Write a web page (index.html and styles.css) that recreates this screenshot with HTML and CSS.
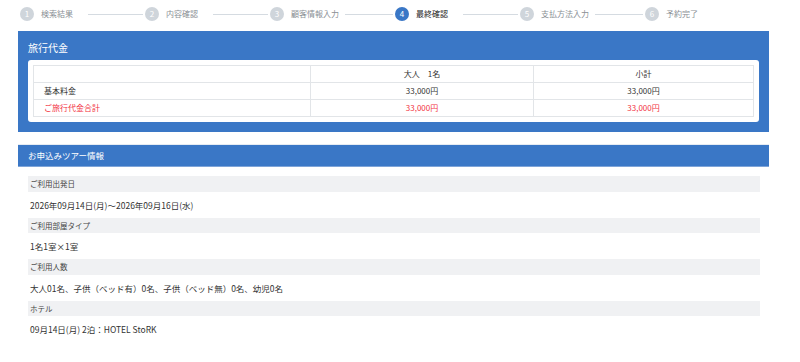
FILE: index.html
```html
<!DOCTYPE html>
<html lang="ja">
<head>
<meta charset="utf-8">
<title>最終確認</title>
<link rel="stylesheet" href="styles.css">
</head>
<body>
<div class="stepper">
  <div class="step"><span class="num">1</span><span class="label">検索結果</span><span class="line"></span></div>
  <div class="step"><span class="num">2</span><span class="label">内容確認</span><span class="line"></span></div>
  <div class="step"><span class="num">3</span><span class="label">顧客情報入力</span><span class="line"></span></div>
  <div class="step active"><span class="num">4</span><span class="label">最終確認</span><span class="line"></span></div>
  <div class="step"><span class="num">5</span><span class="label">支払方法入力</span><span class="line"></span></div>
  <div class="step last"><span class="num">6</span><span class="label">予約完了</span></div>
</div>

<section class="price-panel">
  <h2 class="price-title">旅行代金</h2>
  <div class="price-box">
    <table class="price-table">
      <colgroup><col class="c1"><col class="c2"><col></colgroup>
      <tr><td></td><td class="num-cell">大人　1名</td><td class="num-cell">小計</td></tr>
      <tr><td class="name-cell">基本料金</td><td class="num-cell">33,000円</td><td class="num-cell">33,000円</td></tr>
      <tr class="total"><td class="name-cell">ご旅行代金合計</td><td class="num-cell">33,000円</td><td class="num-cell">33,000円</td></tr>
    </table>
  </div>
</section>

<section class="tour-panel">
  <h2 class="tour-title">お申込みツアー情報</h2>
  <div class="tour-body">
    <div class="tour-label">ご利用出発日</div>
    <div class="tour-value">2026年09月14日(月)～2026年09月16日(水)</div>
    <div class="tour-label">ご利用部屋タイプ</div>
    <div class="tour-value">1名1室×1室</div>
    <div class="tour-label">ご利用人数</div>
    <div class="tour-value">大人01名、子供（ベッド有）0名、子供（ベッド無）0名、幼児0名</div>
    <div class="tour-label">ホテル</div>
    <div class="tour-value">09月14日(月) 2泊：HOTEL StoRK</div>
  </div>
</section>
</body>
</html>
```

FILE: styles.css
```css
* { box-sizing: border-box; }
body {
  margin: 0;
  background: #fff;
  font-family: "Noto Sans CJK JP", "Noto Sans", sans-serif;
  color: #333;
}
.stepper {
  display: flex;
  align-items: center;
  height: 31px;
  padding: 0 0 3px 20px;
}
.step {
  display: flex;
  align-items: center;
  width: 125px;
}
.step .num {
  width: 14px;
  height: 14px;
  border-radius: 50%;
  background: #cfd5db;
  color: #fff;
  font-size: 8px;
  line-height: 14px;
  text-align: center;
  flex: none;
}
.step .label {
  margin-left: 7px;
  margin-right: 6px;
  min-width: 41px;
  font-size: 8px;
  line-height: 12px;
  color: #8a8f95;
  white-space: nowrap;
}
.step .line {
  flex: 1;
  height: 1px;
  background: #d5dbe1;
  margin-right: 2px;
}
.step.active .num { background: #3a77c6; }
.step.active .label { color: #222; }

.price-panel {
  margin: 0 0 0 18px;
  width: 751px;
  background: #3a77c6;
  padding: 0 10px 10px;
}
.price-title {
  margin: 0;
  padding: 10px 0 6px;
  font-size: 10px;
  line-height: 13px;
  font-weight: normal;
  color: #fff;
}
.price-box {
  background: #fff;
  border-radius: 3px;
  padding: 5px;
}
.price-table {
  width: 100%;
  border-collapse: collapse;
  font-size: 8px;
}
.price-table .c1 { width: 277px; }
.price-table .c2 { width: 223px; }
.price-table td {
  border: 1px solid #e2e5e8;
  height: 17px;
  line-height: 14px;
  padding: 0;
  color: #333;
}
.price-table .name-cell { padding-left: 10px; }
.price-table .num-cell { text-align: center; }
.price-table .total td { color: #f2323f; }

.tour-panel {
  margin: 12px 0 0 18px;
  width: 751px;
}
.tour-title {
  margin: 0;
  height: 23px;
  padding-left: 10px;
  background: #3a77c6;
  border-top: 1px solid #e6ecf3;
  border-bottom: 1px solid #7ea4d8;
  color: #fff;
  font-size: 8.5px;
  line-height: 21px;
  font-weight: normal;
}
.tour-body {
  padding: 9px 9px 0 10px;
}
.tour-label {
  background: #f0f1f3;
  height: 15.5px;
  line-height: 15.5px;
  padding-left: 2px;
  font-size: 7.5px;
  color: #444;
}
.tour-value {
  height: 26px;
  line-height: 26px;
  padding-left: 2px;
  font-size: 8.5px;
  color: #333;
}
```
